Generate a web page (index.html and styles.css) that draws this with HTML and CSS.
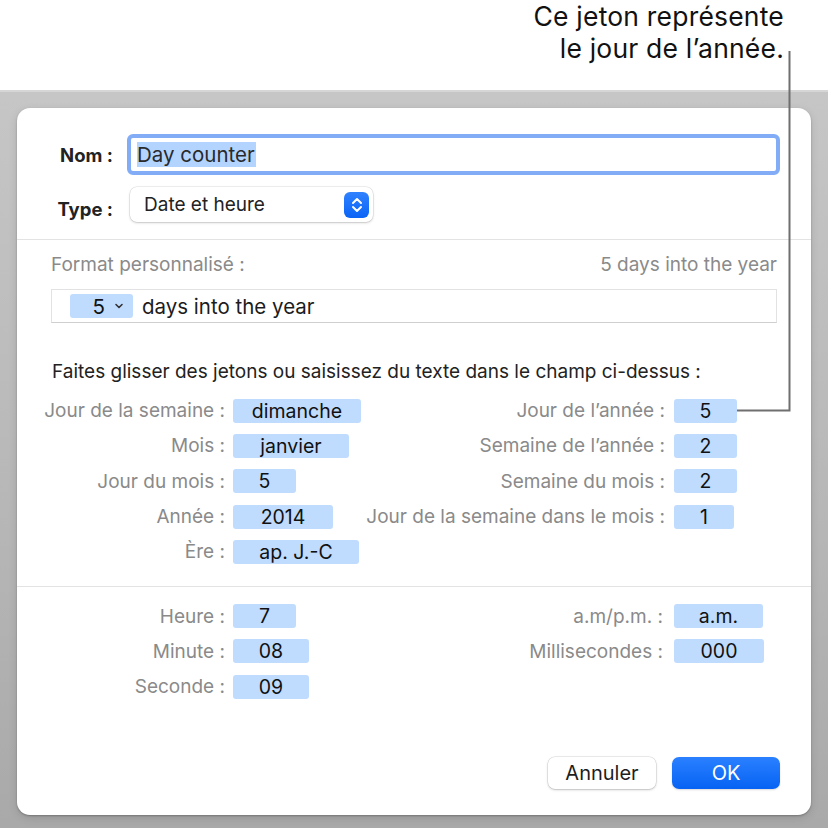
FILE: index.html
```html
<!DOCTYPE html>
<html lang="fr">
<head>
<meta charset="utf-8">
<title>Format personnalisé</title>
<link rel="stylesheet" href="styles.css">
</head>
<body>
<div class="page">
  <div class="callout">
    <p>Ce jeton représente<br>le jour de l’année.</p>
  </div>
  <div class="backdrop">
    <div class="dialog">
      <div class="head">
        <div class="row">
          <span class="blabel">Nom :</span>
          <div class="namefield"><span class="sel">Day counter</span></div>
        </div>
        <div class="row row-type">
          <span class="blabel">Type :</span>
          <div class="popup">
            <span>Date et heure</span>
            <span class="stepper">
              <svg width="14" height="18" viewBox="0 0 14 18"><path d="M3 7 L7 3 L11 7 M3 11 L7 15 L11 11" fill="none" stroke="#fff" stroke-width="2" stroke-linecap="round" stroke-linejoin="round"/></svg>
            </span>
          </div>
        </div>
      </div>
      <div class="sep"></div>
      <div class="format">
        <div class="format-top">
          <span class="glabel">Format personnalisé :</span>
          <span class="glabel">5 days into the year</span>
        </div>
        <div class="tokenfield">
          <span class="tok tok-menu">5 <svg width="10" height="8" viewBox="0 0 10 8"><path d="M2 2.5 L5 5.5 L8 2.5" fill="none" stroke="#333" stroke-width="1.6" stroke-linecap="round" stroke-linejoin="round"/></svg></span>
          <span class="ftext">days into the year</span>
        </div>
        <p class="hint">Faites glisser des jetons ou saisissez du texte dans le champ ci-dessus :</p>
      </div>
      <div class="grid">
        <span class="lab">Jour de la semaine :</span><span class="cell"><span class="tok w147">dimanche</span></span>
        <span class="lab lab2">Jour de l’année :</span><span class="cell"><span class="tok w63">5</span></span>

        <span class="lab">Mois :</span><span class="cell"><span class="tok w116">janvier</span></span>
        <span class="lab lab2">Semaine de l’année :</span><span class="cell"><span class="tok w63">2</span></span>

        <span class="lab">Jour du mois :</span><span class="cell"><span class="tok w63">5</span></span>
        <span class="lab lab2">Semaine du mois :</span><span class="cell"><span class="tok w63">2</span></span>

        <span class="lab">Année :</span><span class="cell"><span class="tok w100">2014</span></span>
        <span class="lab lab2">Jour de la semaine dans le mois :</span><span class="cell"><span class="tok w60">1</span></span>

        <span class="lab">Ère :</span><span class="cell"><span class="tok w126">ap. J.-C</span></span>
        <span class="lab lab2"></span><span class="cell"></span>
      </div>
      <div class="sep sep2"></div>
      <div class="grid grid-time">
        <span class="lab">Heure :</span><span class="cell"><span class="tok w63">7</span></span>
        <span class="lab lab2 lab3">a.m/p.m. :</span><span class="cell"><span class="tok w89">a.m.</span></span>

        <span class="lab">Minute :</span><span class="cell"><span class="tok w76">08</span></span>
        <span class="lab lab2 lab3">Millisecondes :</span><span class="cell"><span class="tok w90">000</span></span>

        <span class="lab">Seconde :</span><span class="cell"><span class="tok w76">09</span></span>
        <span class="lab lab2"></span><span class="cell"></span>
      </div>
      <div class="buttons">
        <button class="btn">Annuler</button>
        <button class="btn btn-ok">OK</button>
      </div>
    </div>
  </div>
  <svg class="leader" width="828" height="828" viewBox="0 0 828 828">
    <path d="M789.5 51 V410.5 H737" fill="none" stroke="#6f6f6f" stroke-width="2"/>
  </svg>
</div>
</body>
</html>
```
FILE: styles.css
```css
html, body {
  margin: 0;
  padding: 0;
  background: #fff;
}
body {
  font-family: Inter, "Noto Sans", "Liberation Sans", sans-serif;
  -webkit-font-smoothing: antialiased;
}
.page {
  position: relative;
  width: 828px;
  height: 828px;
  overflow: hidden;
}
.callout {
  height: 90px;
  display: flex;
  justify-content: flex-end;
  padding-right: 44px;
  box-sizing: border-box;
}
.callout p {
  margin: 0;
  text-align: right;
  font-size: 26.5px;
  line-height: 32px;
  color: #111;
  letter-spacing: 0.2px;
}
.backdrop {
  height: 738px;
  box-sizing: border-box;
  padding: 16px 17px 0 17px;
  background: linear-gradient(#c6c6c6, #b6b6b6 60%, #a9a9a9);
  border-top: 2px solid #d6d6d6;
}
.dialog {
  background: #fff;
  border-radius: 13px;
  height: 707px;
  box-sizing: border-box;
  box-shadow: 0 1px 2px rgba(0,0,0,0.25), 0 3px 10px rgba(0,0,0,0.12);
  display: flex;
  flex-direction: column;
  color: #1e1e1e;
  font-size: 19px;
}
.head {
  padding: 26px 0 0 37px;
  display: flex;
  flex-direction: column;
  gap: 12px;
}
.row {
  display: flex;
  align-items: center;
}
.blabel {
  font-weight: 700;
  width: 59px;
  text-align: right;
  font-size: 18.5px;
  color: #222;
  white-space: nowrap;
}
.namefield {
  margin-left: 14px;
  width: 653px;
  height: 41px;
  box-sizing: border-box;
  border: 4px solid #82adf6;
  border-radius: 6px;
  display: flex;
  align-items: center;
  padding-left: 6px;
}
.sel {
  background: #b3d4ff;
  font-size: 20.5px;
  line-height: 25px;
  color: #2a2a2a;
  padding-right: 1px;
}
.row-type .blabel {
  position: relative;
  top: 4px;
}
.popup {
  margin-left: 17px;
  width: 243px;
  height: 35px;
  box-sizing: border-box;
  border-radius: 7px;
  background: #fff;
  box-shadow: 0 0 0 0.5px rgba(0,0,0,0.12), 0 1px 2.5px rgba(0,0,0,0.18);
  display: flex;
  align-items: center;
  justify-content: space-between;
  padding: 0 4px 0 14px;
  font-size: 19px;
  color: #222;
}
.stepper {
  width: 25px;
  height: 26px;
  border-radius: 6px;
  background: linear-gradient(#2f82ff, #0a64f5);
  display: flex;
  align-items: center;
  justify-content: center;
}
.sep {
  height: 1px;
  background: #e3e3e3;
  margin-top: 17px;
}
.format {
  padding: 0 34px 0 34px;
}
.format-top {
  display: flex;
  justify-content: space-between;
  margin-top: 13px;
  line-height: 23px;
}
.glabel {
  color: #8a8a8a;
  font-size: 19px;
}
.tokenfield {
  margin-top: 13px;
  height: 34px;
  box-sizing: border-box;
  border: 1px solid #e2e2e2;
  border-bottom-color: #cfcfcf;
  display: flex;
  align-items: center;
  padding-left: 18px;
}
.tok {
  display: inline-flex;
  align-items: center;
  justify-content: center;
  height: 24px;
  border-radius: 3px;
  background: #bfdbfe;
  color: #111;
  font-size: 19.5px;
  box-sizing: border-box;
}
.tok-menu {
  width: 63px;
  justify-content: flex-end;
  padding-right: 9px;
  gap: 9px;
  font-size: 20.5px;
}
.ftext {
  margin-left: 9px;
  font-size: 20.5px;
  color: #1c1c1c;
}
.hint {
  margin: 37px 0 0 1px;
  font-size: 19px;
  line-height: 23px;
  color: #222;
}
.grid {
  display: grid;
  grid-template-columns: 216px 128px 313px 1fr;
  grid-auto-rows: 35.3px;
  align-items: center;
  margin-top: 10px;
}
.lab {
  text-align: right;
  padding-right: 8px;
  color: #8a8a8a;
  font-size: 19px;
  white-space: nowrap;
}
.lab2 {
  padding-right: 9px;
}
.lab3 {
  padding-right: 11px;
}
.cell {
  display: flex;
}
.w147 { width: 147px; }
.w116 { width: 116px; }
.w100 { width: 100px; }
.w126 { width: 126px; }
.w63 { width: 63px; }
.w60 { width: 60px; }
.w76 { width: 76px; }
.w89 { width: 89px; }
.w90 { width: 90px; }
.sep2 {
  margin-top: 17px;
}
.grid-time {
  margin-top: 11px;
}
.buttons {
  margin-top: auto;
  margin-bottom: 26px;
  display: flex;
  justify-content: flex-end;
  gap: 16px;
  padding-right: 31px;
}
.btn {
  width: 108px;
  height: 32px;
  border: none;
  border-radius: 7px;
  font-family: inherit;
  font-size: 20px;
  background: #fff;
  color: #1e1e1e;
  box-shadow: 0 0 0 0.5px rgba(0,0,0,0.14), 0 1px 2.5px rgba(0,0,0,0.2);
  padding: 0;
}
.btn-ok {
  background: linear-gradient(#2a80ff, #0663f3);
  color: #fff;
  box-shadow: 0 1px 2px rgba(0,0,0,0.15);
}
.leader {
  position: absolute;
  left: 0;
  top: 0;
  pointer-events: none;
}
```
